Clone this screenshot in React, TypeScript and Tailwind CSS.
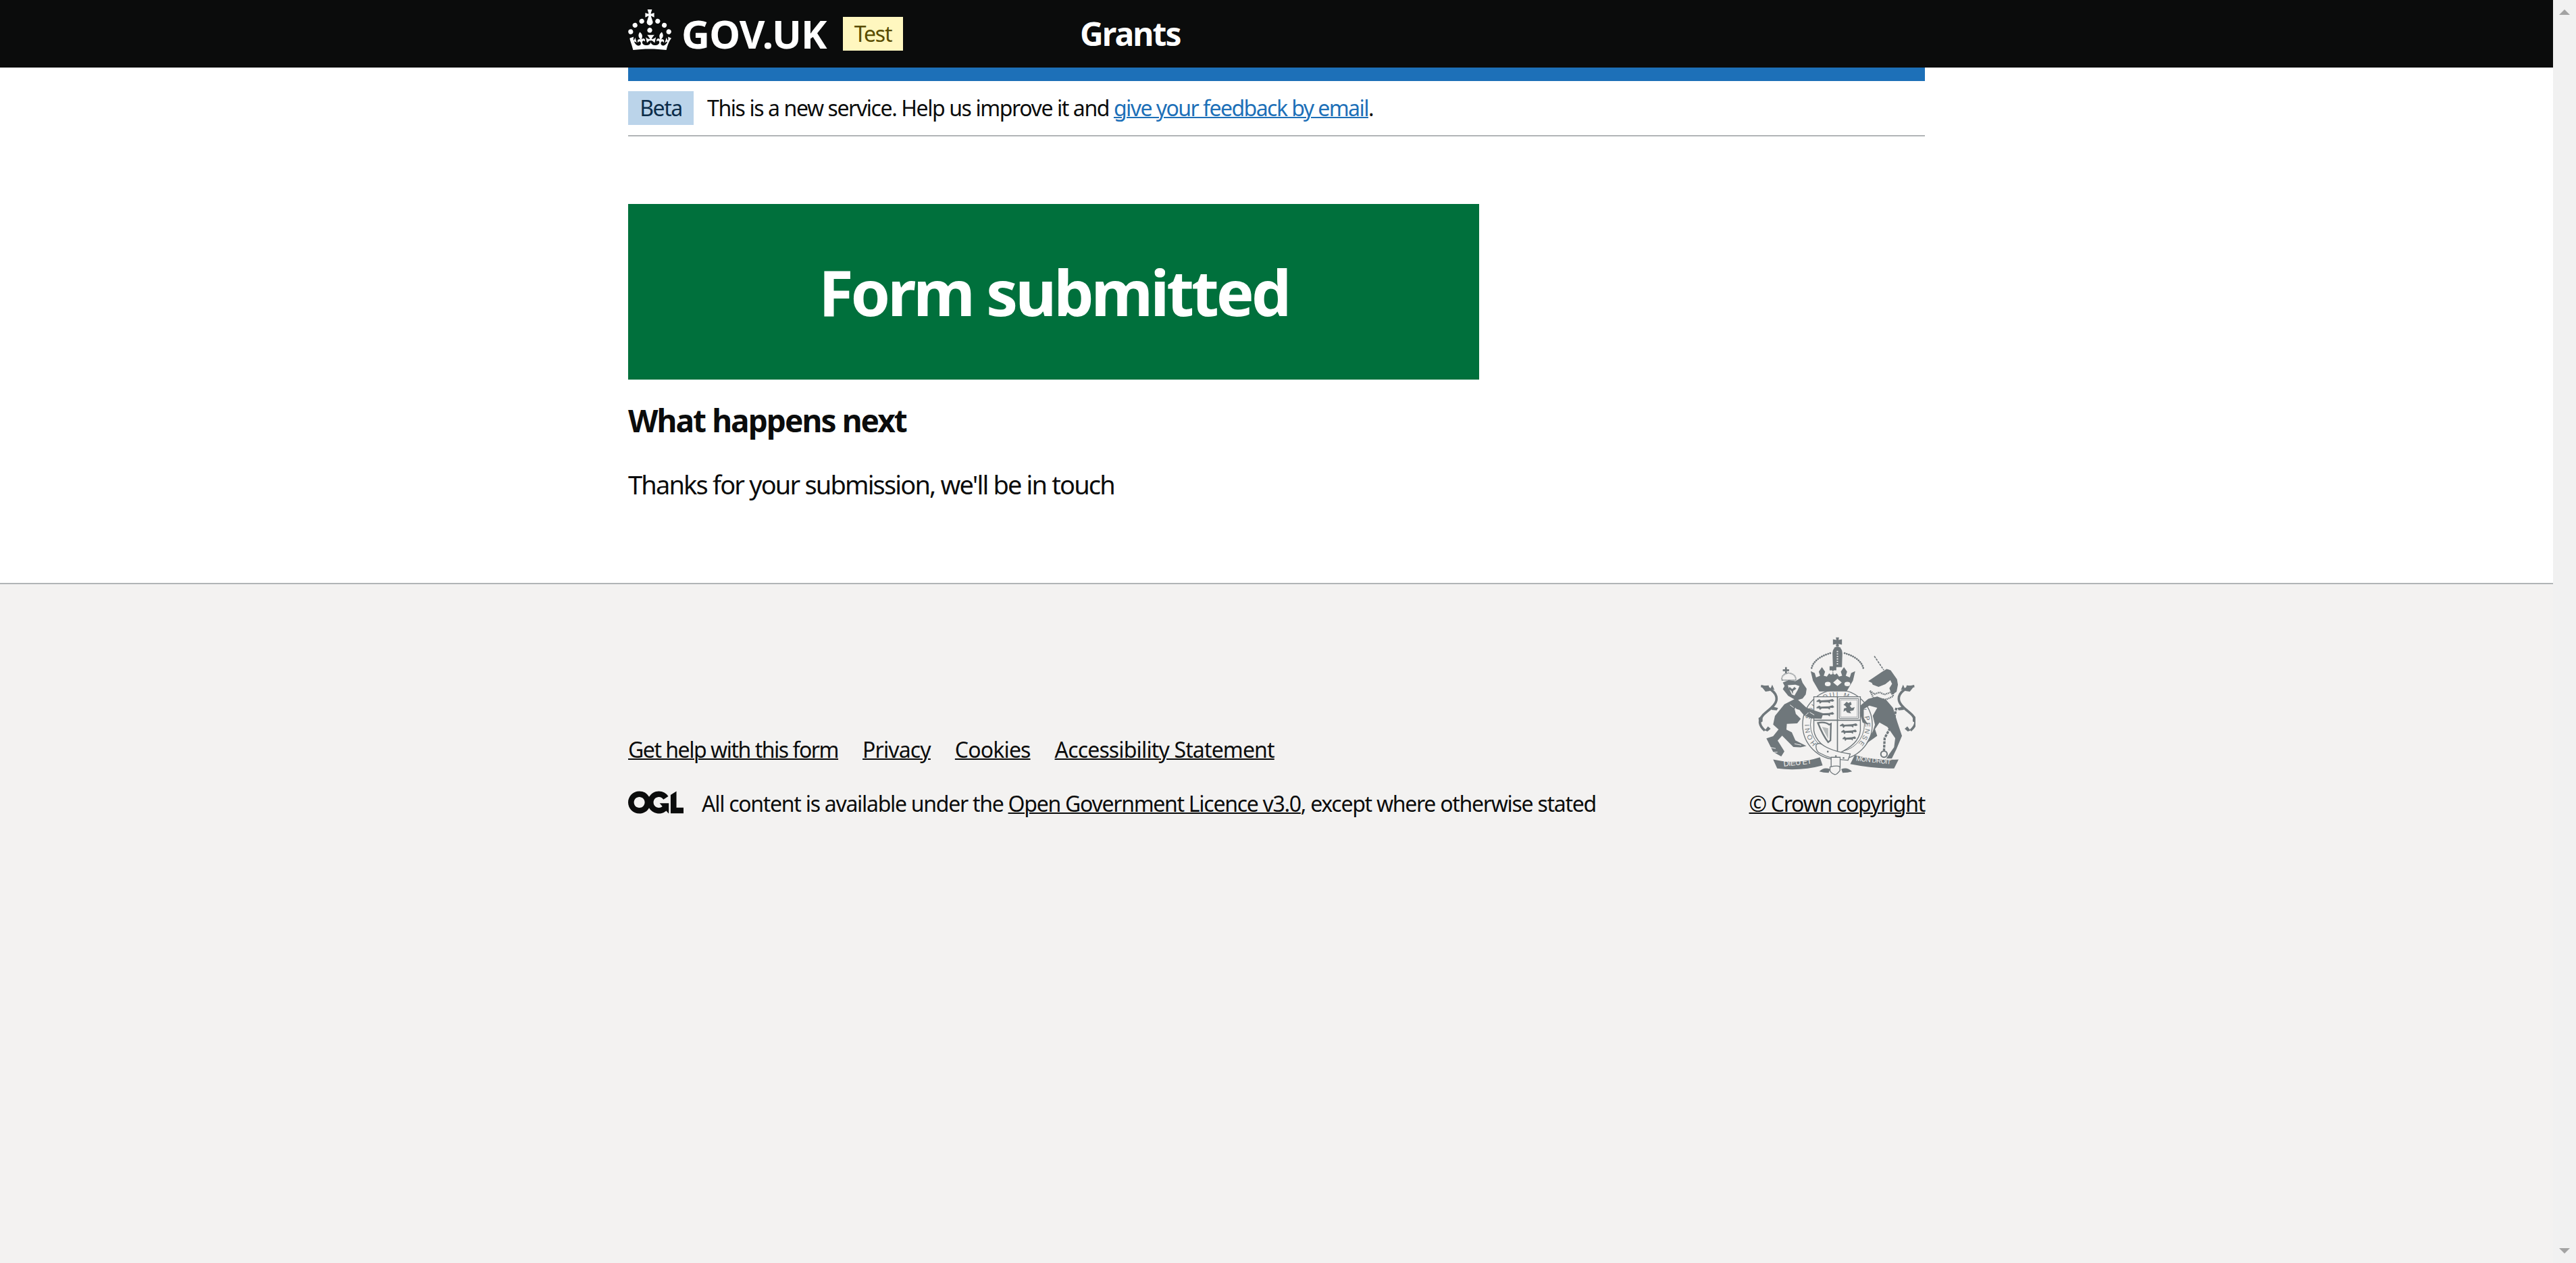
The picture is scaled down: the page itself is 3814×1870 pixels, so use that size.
const F = "font-['Noto_Sans','Lato',sans-serif]";

function Crown() {
  return (
    <svg viewBox="0 0 32 30" className="w-[64px] h-[60px] shrink-0 self-start mt-[14px]" fill="#fff" aria-hidden="true">
      <path d="M22.6 10.4c-1 .4-2-.1-2.4-1-.4-.9.1-2 1-2.4.9-.4 2 .1 2.4 1s-.1 2-1 2.4m-5.9 6.7c-.9.4-2-.1-2.4-1-.4-.9.1-2 1-2.4.9-.4 2 .1 2.4 1s-.1 2-1 2.4m10.8-3.7c-1 .4-2-.1-2.4-1-.4-.9.1-2 1-2.4s2 .1 2.4 1c.3 1-.1 2-1 2.4m3.3 4.8c-1 .4-2-.1-2.4-1-.4-.9.1-2 1-2.4.9-.4 2 .1 2.4 1 .4 1-.1 2-1 2.4M17 4.7l2.3 1.2V2.5l-2.3.7-.2-.2.9-3h-3.4l.9 3-.2.2c-.1.1-2.3-.7-2.3-.7v3.4L15 4.7c.1.1.1.2.2.2l-1.3 4c-.1.2-.1.4-.1.6 0 1.1.8 2 1.9 2.2h.7c1-.2 1.9-1.1 1.9-2.2 0-.2 0-.4-.1-.6l-1.3-4c-.1-.1 0-.2.1-.2m-7.6 5.7c.9.4 2-.1 2.4-1 .4-.9-.1-2-1-2.4-.9-.4-2 .1-2.4 1s0 2 1 2.4m-5 3c.9.4 2-.1 2.4-1 .4-.9-.1-2-1-2.4-.9-.4-2 .1-2.4 1s.1 2 1 2.4m-3.2 4.8c.9.4 2-.1 2.4-1 .4-.9-.1-2-1-2.4-.9-.4-2 .1-2.4 1-.3 1 .1 2 1 2.4m14.8 11c4.4 0 8.6.3 12.3.8 1.1-4.5 2.4-7 3.7-8.8l-2.5-.9c.2 1.3.3 1.9 0 2.7-.4-.4-.8-1.1-1.1-2.3l-1.2 4c.7-.5 1.3-.8 2-.9-1.1 2.5-2.6 3.1-3.5 3-1.1-.2-1.7-1.2-1.5-2.1.3-1.2 1.5-1.5 2.1-.1 1.1-2.3-.8-3-2-2.3 1.9-1.9 2.1-3.5.6-5.6-2.1 1.6-2.1 3.2-1.2 5.5-1.2-1.4-3.2-.6-2.5 1.6.9-1.4 2.1-.5 1.9.8-.2 1.1-1.7 2.1-3.5 1.9-2.7-.2-2.9-2.1-2.9-3.6.7-.1 1.9.5 2.9 1.9l1-4.3c-1.1 1.1-2.1 1.4-3.2 1.4.4-1.2 2.1-3 2.1-3h-5.4s1.7 1.9 2.1 3c-1.1 0-2.1-.2-3.2-1.4l1 4.3c1-1.4 2.2-2 2.9-1.9-.1 1.5-.2 3.4-2.9 3.6-1.9.2-3.4-.8-3.5-1.9-.2-1.3 1-2.2 1.9-.8.7-2.3-1.2-3-2.5-1.6.9-2.2.9-3.9-1.2-5.5-1.5 2-1.3 3.7.6 5.6-1.2-.7-3.1 0-2 2.3.6-1.4 1.8-1.1 2.1.1.2.9-.3 1.9-1.5 2.1-.9.2-2.4-.5-3.5-3 .6 0 1.2.3 2 .9l-1.2-4c-.3 1.1-.7 1.9-1.1 2.3-.3-.8-.2-1.4 0-2.7l-2.9.9C1.3 23 2.6 25.5 3.7 30c3.7-.5 7.9-.8 12.3-.8" />
    </svg>
  );
}

function Ogl() {
  return (
    <svg viewBox="0 0 483.2 195.7" className="w-[82px] h-[34px] shrink-0" fill="#0b0c0c" aria-hidden="true">
      <path d="M421.5 142.8V.1l-50.7 32.3v161.1h112.4v-50.7zm-122.3-9.6A47.12 47.12 0 0 1 221 97.8c0-26 21.1-47.1 47.1-47.1 16.7 0 31.4 8.7 39.7 21.8l42.7-27.2A97.63 97.63 0 0 0 268.1 0c-36.5 0-68.3 20.1-85.1 49.7A98 98 0 0 0 97.8 0C43.9 0 0 43.9 0 97.8s43.9 97.8 97.8 97.8c36.5 0 68.3-20.1 85.1-49.7a97.76 97.76 0 0 0 149.6 25.4l19.4 22.2h3v-87.8h-80l24.3 27.5zM97.8 145c-26 0-47.1-21.1-47.1-47.1s21.1-47.1 47.1-47.1 47.2 21 47.2 47S123.8 145 97.8 145" />
    </svg>
  );
}

const INK = "#6f777b";
const BG = "#f3f2f1";
const PASSANT = "M0 8L12 1l7 5 36-2L72 0l7 8-8 4-10-2-2 9-8-5H23l-8 7-4-8H0z";

function Flourish() {
  return (
    <g fill={INK}>
      <path d="M143 288C178 293 214 316 212 347 210 376 170 398 150 420 130 442 136 466 160 486" fill="none" stroke={INK} strokeWidth="11" />
      <path d="M143 288l34-3 6 25-20 3zM150 420l-18 10 2 24 16-8zM160 486l14-18 12 10-14 12zM195 380l24 6-6 10-24-2zM185 300l8-18 10 24z" />
    </g>
  );
}

function Crest() {
  const serif = "'Liberation Sans',sans-serif";
  return (
    <svg viewBox="130 70 700 615" className="w-[233px] h-[205px]" fill={INK} aria-hidden="true">
      <defs>
        <path id="garter" d="M395 549A125 125 0 1 1 571 549" />
      </defs>
      <Flourish />
      <g transform="matrix(-1 0 0 1 968 0)"><Flourish /></g>

      {/* garter */}
      <circle cx="483" cy="460" r="155" fill={BG} stroke={INK} strokeWidth="4" />
      <circle cx="483" cy="460" r="120" fill="none" stroke={INK} strokeWidth="3" />
      <text fontSize="30" fontFamily={serif}>
        <textPath href="#garter" textLength="575" startOffset="6">HONI SOIT QUI MAL Y PENSE</textPath>
      </text>

      {/* royal crown */}
      <path d="M476 72h14l-2 11 15-3v24l-15-3 2 11h-14l2-11-15 3V80l15 3z" />
      <path d="M483 112q22 4 22 30l-2 62h-40l-2-62q0-26 22-30z" />
      <path d="M483 132v62" stroke={BG} strokeWidth="6" strokeDasharray="5 6" fill="none" />
      <path d="M368 208C378 170 420 150 458 140M598 208C588 170 546 150 508 140" fill="none" stroke={INK} strokeWidth="8" strokeDasharray="1 9" strokeLinecap="round" />
      <path d="M364 222l18 8 6 20 18-8-6-18 14-20 14 20-6 18 14 4 10-14 8 6 12-6-6-14h-12v-18h30v18h-12l-6 14 12 6 8-6 10 14 14-4-6-18 14-20 14 20-6 18 18 8 6-20 18-8-10 42-28 48H402l-28-48z" />
      <ellipse cx="440" cy="279" rx="13" ry="10" fill={BG} />
      <path d="M483 256l19 16-19 16-19-16z" fill={BG} />
      <ellipse cx="527" cy="279" rx="13" ry="10" fill={BG} />

      {/* shield */}
      <path d="M378 336h207v150q-6 62-102 104q-96-42-105-104z" fill={BG} stroke={INK} strokeWidth="4" />
      <path d="M483 336v250M378 440h207" stroke={INK} strokeWidth="5" fill="none" />
      {[346, 374, 404].map((y) => (
        <path key={y} d={PASSANT} transform={`translate(390 ${y})`} />
      ))}
      {[454, 482, 512].map((y, i) => (
        <path key={y} d={PASSANT} transform={`translate(${494 + i * 6} ${y}) scale(${1 - i * 0.12} 1)`} />
      ))}
      <path d="M491 344h86v88h-86z" fill="none" stroke={INK} strokeWidth="3" />
      <path d="M497 350h74v76h-74z" fill="none" stroke={INK} strokeWidth="1.5" />
      <path d="M510 372l14-14 8 6 10-6 4 12-8 6 8 10 14-4-6 14-16 4 6 10-18-4-6-10-10 6 2-14 12-4-6-8z" />
      <path d="M396 452q34-6 50 8l8-4-2 74-10 8q-24-30-46-86z" fill="none" stroke={INK} strokeWidth="7" />
      <path d="M414 470l28 6v48zM422 470l20 46M432 472l10 22" fill={INK} fillOpacity="0.45" />

      {/* lion */}
      <path d="M300 342l45 42 45 16 30 10-8 24-44-2-32-12-22-26-22-6 6 24 22 22-16 20-46 2-2 26 24 12 16 36 49 25-26 6-32-2-30-30-20-20-20 22 30 48-14 22-36-20-30-60 30-10 24-30-24-22 8-38 42-52z" />
      <path d="M240 272l26-10 30 4 24-14 8 22 18 26-4 26-14 18-28 8-36-20-24-30 8-14z" />
      <path d="M262 284l34-2 18 6-8 18-14 24-12-4-12-26z" fill={BG} />
      <path d="M270 292l12 10 10-10 8 8-14 10-2 14-6-14-12-8z" />
      <path d="M236 262q-4-26 30-32q34 6 32 32z" fill="none" stroke={INK} strokeWidth="6" strokeDasharray="3 3" />
      <path d="M250 204h8v10h10v8h-10v10h-8v-10h-10v-8h10z" />
      <path d="M295 385l22 30M360 405l20 12M340 420l14-14M272 372l16 12" stroke={BG} strokeWidth="3" fill="none" />
      <path d="M178 560l30 6M188 584l28-2M292 545l30 6" stroke={BG} strokeWidth="3" fill="none" />

      {/* unicorn */}
      <path d="M647 155l42 62" stroke={INK} strokeWidth="5" strokeDasharray="10 4" fill="none" />
      <path d="M620 266l30-20 30-20 22-14 18 6 28 40 4 24-6 32-22 14-10-30 12-20-8-16-22 18-30 12-26-10-4-8z" />
      <path d="M628 310l20 14 22-8 22 10 28-10 14-12-4 30-30 14-56-6z" fill="none" stroke={INK} strokeWidth="7" strokeDasharray="5 3" />
      <path d="M585 375l35-30 40-10 40 15 30 35 20 65 20 60-25 60-20 40h-25l35-50 5-40-35-50-35-20-20 30 10 30-50 35 30-55 10-30-10-40 20-35-35-10-25 15 0 40 20 30-25-10-12-40z" />
      <path d="M745 385l-12 60-40 75-3 56" fill="none" stroke={INK} strokeWidth="10" strokeDasharray="12 4" />
      <circle cx="690" cy="591" r="14" fill="none" stroke={INK} strokeWidth="6" />

      {/* motto + belt */}
      <path d="M197 615q103 25 208-10l12 36q-95 26-202 14z" />
      <path d="M540 635l20-40q90 25 195 20l-20 40q-95 0-195-20z" />
      <path d="M388 550q10-12 26-2 40 30 126 42l-10 28q-70 0-130-34-14-10-12-34z" fill={BG} stroke={INK} strokeWidth="4" />
      <path d="M455 605h40v45h-40z" fill={BG} stroke={INK} strokeWidth="4" />
      <path d="M450 648q34-8 44 0v16q-14 18-22 18-18-6-22-18z" fill={BG} stroke={INK} strokeWidth="4" />
      <path d="M402 668q22-22 48-10l-6 16q-24 0-42-6zM548 668q-22-22-48-10l6 16q24 0 42-6z" />
      <circle cx="440" cy="580" r="4" /><circle cx="476" cy="600" r="4" /><circle cx="510" cy="608" r="4" />
      <text x="244" y="646" fontSize="34" fill={BG} fontFamily={serif} transform="rotate(-6 244 646)">DIEU ET</text>
      <text x="565" y="620" fontSize="29" fill={BG} fontFamily={serif} transform="rotate(6 565 620)">MON DROIT</text>
    </svg>
  );
}

function Scrollbar() {
  return (
    <div className="w-[34px] shrink-0 bg-[#f1f1f1] flex flex-col justify-between items-center py-[14px]">
      <svg viewBox="0 0 16 8" className="w-[16px] h-[8px]" fill="#a3a3a3" aria-hidden="true"><path d="M8 0l8 8H0z" /></svg>
      <svg viewBox="0 0 16 8" className="w-[16px] h-[8px]" fill="#a3a3a3" aria-hidden="true"><path d="M0 0h16L8 8z" /></svg>
    </div>
  );
}

export default function App() {
  return (
    <div className={`flex h-[1870px] overflow-hidden text-[#0b0c0c] ${F}`}>
      <div className="flex-1 flex flex-col min-w-0 bg-white">
        <header className="h-[100px] bg-[#0b0c0c] shrink-0">
          <div className="w-[1920px] mx-auto flex items-center h-full">
            <Crown />
            <span className="ml-[15px] w-[216px] text-[58px] font-bold text-white leading-none tracking-[-0.8px] whitespace-nowrap">GOV.UK</span>
            <span className="ml-[23px] w-[89px] h-[50px] bg-[#fff7bf] text-[#594d00] text-[32px] tracking-[-0.04em] flex items-center justify-center">Test</span>
            <span className="ml-[262px] text-[48px] font-bold text-white leading-none tracking-[-0.04em]">Grants</span>
          </div>
        </header>
        <div className="w-[1920px] mx-auto">
          <div className="h-[20px] bg-[#1d70b8]" />
          <div className="flex items-center h-[82px] border-b-2 border-[#b1b4b6] text-[32px] tracking-[-1.41px]">
            <span className="w-[97px] h-[50px] bg-[#bbd4ea] text-[#0c2d4a] flex items-center justify-center mr-[20px]">Beta</span>
            <span>This is a new service. Help us improve it and <a className="text-[#1d70b8] underline decoration-2 tracking-[-1.55px]">give your feedback by email</a>.</span>
          </div>
          <main className="pt-[100px] h-[661px]">
            <div className="w-[1260px] h-[260px] bg-[#00703c] flex items-center justify-center">
              <h1 className="text-[94px] font-bold text-white leading-[100px] tracking-[-4.07px]">Form submitted</h1>
            </div>
            <h2 className="mt-[30px] text-[46px] font-bold leading-[60px] tracking-[-1.94px]">What happens next</h2>
            <p className="mt-[40px] text-[38px] leading-[50px] tracking-[-1.84px]">Thanks for your submission, we'll be in touch</p>
          </main>
        </div>
        <footer className="flex-1 bg-[#f3f2f1] border-t-2 border-[#b1b4b6]">
          <div className="w-[1920px] mx-auto flex justify-between items-end pt-[78px]">
            <div className="text-[32px] pb-[2px] tracking-[-0.04em]">
              <nav className="flex gap-[36px]">
                <a className="underline decoration-2 tracking-[-1.48px]">Get help with this form</a>
                <a className="underline decoration-2 tracking-[-0.85px]">Privacy</a>
                <a className="underline decoration-2 tracking-[-0.85px]">Cookies</a>
                <a className="underline decoration-2 tracking-[-0.85px]">Accessibility Statement</a>
              </nav>
              <div className="flex items-center mt-[30px]">
                <Ogl />
                <span className="ml-[27px] translate-y-[2px]">All content is available under the <a className="underline decoration-2">Open Government Licence v3.0</a>, except where otherwise stated</span>
              </div>
            </div>
            <div className="flex flex-col items-center text-[32px] tracking-[-0.04em]">
              <Crest />
              <a className="underline decoration-2 mt-[18px]">© Crown copyright</a>
            </div>
          </div>
        </footer>
      </div>
      <Scrollbar />
    </div>
  );
}
